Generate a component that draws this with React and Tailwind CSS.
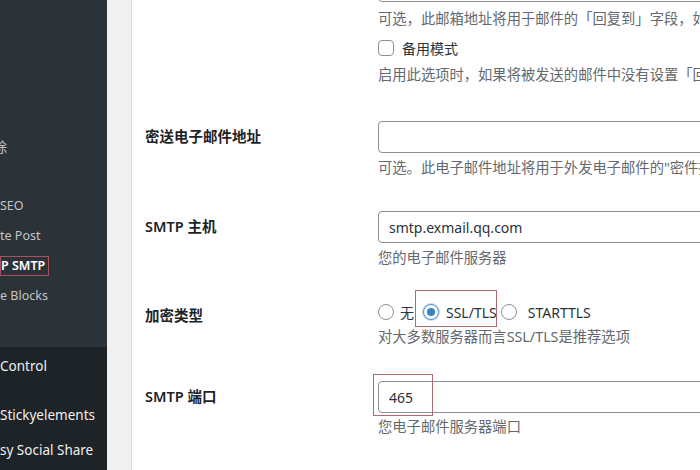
import React from "react";

const font = { fontFamily: '"Noto Sans", "Noto Sans CJK SC", sans-serif' };

function Input({ value = "", className = "" }) {
  return (
    <div
      className={`h-[32px] w-[340px] rounded-[4px] border border-[#8c8f94] bg-white px-[10px] flex items-center text-[14px] text-[#2c3338] ${className}`}
    >
      {value}
    </div>
  );
}

function Desc({ children, className = "" }) {
  return (
    <p className={`h-[22px] leading-[22px] text-[14.3px] text-[#646970] whitespace-nowrap ${className}`}>
      {children}
    </p>
  );
}

function Label({ children, className = "h-[32px]" }) {
  return (
    <div className={`flex w-[233px] shrink-0 items-center text-[14.5px] font-semibold text-[#1d2327] ${className}`}>
      {children}
    </div>
  );
}

function Radio({ checked }) {
  return (
    <span
      className={`flex h-[16px] w-[16px] shrink-0 items-center justify-center rounded-full border ${
        checked ? "border-[#4f94d4] shadow-[0_0_0_1px_#c5d9ed]" : "border-[#8c8f94]"
      } bg-white`}
    >
      {checked && <span className="h-[8px] w-[8px] rounded-full bg-[#3582c4]" />}
    </span>
  );
}

function Sidebar() {
  return (
    <aside className="flex w-[107px] shrink-0 flex-col overflow-hidden whitespace-nowrap">
      <div className="h-[347px] bg-[#2c3338] text-[12.5px] text-[#c3c4c7]">
        <div className="mt-[136px] h-[22px] leading-[22px] -ml-[7px] text-[14px]">除</div>
        <div className="mt-[33px] h-[30px] leading-[30px]">SEO</div>
        <div className="h-[30px] leading-[30px]">te Post</div>
        <div className="h-[30px] flex items-center">
          <span className="h-[20px] leading-[18px] border border-[#a8505e] pr-[3px] font-semibold text-white">
            P SMTP
          </span>
        </div>
        <div className="h-[30px] leading-[30px]">e Blocks</div>
      </div>
      <div className="flex-1 bg-[#1d2327] text-[13.5px] text-[#f0f0f1]">
        <div className="mt-[8px] h-[22px] leading-[22px]">Control</div>
        <div className="mt-[27px] h-[22px] leading-[22px]">Stickyelements</div>
        <div className="mt-[13px] h-[22px] leading-[22px]">sy Social Share</div>
      </div>
    </aside>
  );
}

export default function App() {
  return (
    <div className="flex h-[470px] w-[700px] overflow-hidden bg-[#f0f0f1]" style={font}>
      <Sidebar />
      <main className="ml-[24px] flex-1 overflow-hidden border-l border-[#dcdcde] bg-white">
        <div className="flex flex-col pl-[13px]">
          {/* continued from above */}
          <div className="flex">
            <div className="w-[233px] shrink-0" />
            <div className="flex flex-col">
              <Input className="-mt-[30px]" />
              <Desc className="mt-[6px]">可选，此邮箱地址将用于邮件的「回复到」字段，如果</Desc>
              <label className="mt-[7px] flex h-[22px] items-center gap-[8px] text-[14px] text-[#2c3338]">
                <span className="h-[16px] w-[16px] rounded-[4px] border border-[#8c8f94] bg-white" />
                备用模式
              </label>
              <Desc className="mt-[5px]">启用此选项时，如果将被发送的邮件中没有设置「回复到」</Desc>
            </div>
          </div>

          <div className="mt-[35px] flex">
            <Label>密送电子邮件地址</Label>
            <div className="flex flex-col">
              <Input />
              <Desc className="mt-[4px]">可选。此电子邮件地址将用于外发电子邮件的"密件抄送"</Desc>
            </div>
          </div>

          <div className="mt-[32px] flex">
            <Label>SMTP 主机</Label>
            <div className="flex flex-col">
              <Input value="smtp.exmail.qq.com" />
              <Desc className="mt-[4px]">您的电子邮件服务器</Desc>
            </div>
          </div>

          <div className="mt-[32px] flex">
            <Label className="mt-[4px] h-[22px]">加密类型</Label>
            <div className="flex flex-col">
              <div className="relative flex h-[22px] items-center text-[14px] text-[#2c3338]">
                <Radio />
                <span className="ml-[6px]">无</span>
                <span className="ml-[9px]">
                  <Radio checked />
                </span>
                <span className="ml-[7px]">SSL/TLS</span>
                <span className="ml-[4px]">
                  <Radio />
                </span>
                <span className="ml-[11px]">STARTTLS</span>
                <span className="pointer-events-none absolute left-[37px] top-[-11px] h-[37px] w-[82px] border border-[#b06a72]" />
              </div>
              <Desc className="mt-[3px]">对大多数服务器而言SSL/TLS是推荐选项</Desc>
            </div>
          </div>

          <div className="mt-[33px] flex">
            <Label>SMTP 端口</Label>
            <div className="relative flex flex-col">
              <Input value="465" />
              <span className="pointer-events-none absolute left-[-5px] top-[-7px] h-[42px] w-[60px] border border-[#b06a72]" />
              <Desc className="mt-[3px]">您电子邮件服务器端口</Desc>
            </div>
          </div>
        </div>
      </main>
    </div>
  );
}
